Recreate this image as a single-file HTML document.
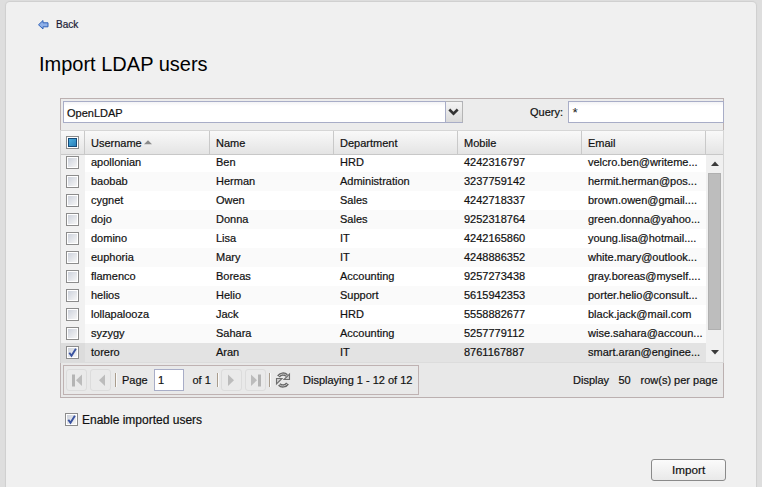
<!DOCTYPE html>
<html><head><meta charset="utf-8">
<style>
*{box-sizing:border-box;margin:0;padding:0}
html,body{width:762px;height:487px;overflow:hidden;background:#dedede;font-family:"Liberation Sans",sans-serif;font-size:11px;color:#111;-webkit-text-stroke:0.2px #111}
.abs{position:absolute;white-space:nowrap}
#panel{position:absolute;left:6px;top:2px;width:750px;height:500px;background:#f0f0f0;border-radius:4px;box-shadow:0 0 1px 1px #cfcfcf}
#back{left:56px;top:18.6px;color:#1f1f45;font-size:10px}
#backicon{left:38px;top:20px}
#title{left:39px;top:52.6px;font-size:20px;color:#000;-webkit-text-stroke:0}
#grid{left:60px;top:98px;width:664px;height:300px;border:1px solid #bbb0b0;background:#ececec}
.combo{left:63px;top:101px;width:400px;height:22px;border:1px solid #a8adc7;background:linear-gradient(#f3f3f5,#fff 4px)}
.combo span{position:absolute;left:3px;top:4.8px}
.trig{position:absolute;right:-1px;top:-1px;width:18px;height:22px;border:1px solid #b4b4b4;border-left-color:#a8adc7;border-bottom-color:#a8adc7;border-top-right-radius:2px;background:linear-gradient(#f4f4f4,#dadada)}
.trig svg{position:absolute;left:2px;top:6px}
#qlabel{left:530px;top:105.8px}
.qfield{left:568px;top:101px;width:156px;height:22px;border:1px solid #a8adc7;background:linear-gradient(#f3f3f5,#fff 4px)}
.qfield span{position:absolute;left:3.5px;top:2.5px;font-size:13.5px;-webkit-text-stroke:0;color:#222}
#hdr{position:absolute;z-index:2;left:61px;top:130px;width:662px;height:25px;background:linear-gradient(#f9f9f9,#e4e4e4);border-top:1px solid #d6d6d6;border-bottom:1px solid #c8c8c8}
.hc{position:absolute;top:0;height:23px;border-right:1px solid #c9c9c9}
.hc span{position:absolute;left:6px;top:5.8px}
.row{position:absolute;left:61px;width:645px;height:19px;background:#fff}
.row.alt{background:#fafafa}
.row.sel{background:#e3e3e3}
.row span{position:absolute;top:3.4px;white-space:nowrap}
.cbcol{position:absolute;left:0;top:0;width:24px;height:19px;background:#f1f1f1}
.row.sel .cbcol{background:#dcdcdc}
.cb{position:absolute;left:5px;top:3px;width:13px;height:13px;border:1px solid #8c8c8c;background:#fff;padding:1px}
.cb::before{content:"";display:block;width:9px;height:9px;background:linear-gradient(135deg,#cdd2dc,#f6f6f6)}
.cb.chk svg{position:absolute;left:0;top:0}
#hcb{z-index:3;left:66px;top:136px;width:13px;height:13px;border:1px solid #8c8c8c;background:#fff;padding:1px}
#hcb::before{content:"";display:block;width:9px;height:9px;box-sizing:border-box;border:1px solid #174a78;background:linear-gradient(135deg,#4ab0e0,#2a7fb8)}
#sb{left:706px;top:154px;width:17px;height:208px;background:#f0f0f0}
#thumb{left:708px;top:173px;width:13px;height:157px;background:#bdbdbd;border:1px solid #b0b0b0}
#pbar{left:61px;top:362px;width:662px;height:35px;background:#e8e8e8;border-top:1px solid #dcdcdc}
#pbox{left:63px;top:365px;width:356px;height:30px;border:1px solid #bfb2b2;background:#e9e9e9}
.pbtn{position:absolute;top:369px;width:21px;height:22px;border:1px solid #dcdcdc;border-radius:3px;background:#eaeaea}
.psep{position:absolute;top:373px;width:2px;height:14px;border-left:1px solid #a99c8c;border-right:1px solid #fafafa}
#pinput{left:154px;top:369px;width:30px;height:22px;border:1px solid #a8adc7;background:#fff}
#pinput span{position:absolute;left:3px;top:3.8px}
.ptxt{top:374px}
#enable{left:82px;top:412.8px;font-size:12px}
#ecb{left:65px;top:413px;width:13px;height:13px;border:1px solid #8c8c8c;background:#fff;padding:1px}
#ecb::before{content:"";display:block;width:9px;height:9px;background:linear-gradient(135deg,#cdd2dc,#f6f6f6)}
#ecb svg{position:absolute;left:0;top:0}
#import{left:651px;top:459px;width:75px;height:22px;border:1px solid #8a8a8a;border-radius:3px;background:linear-gradient(#fbfbfb,#e9e9e9)}
#import span{position:absolute;left:20px;top:3.2px;font-size:11.7px}
</style></head>
<body>
<div id="panel"></div>
<svg id="backicon" class="abs" width="11" height="10" viewBox="0 0 11 10"><path d="M0.5 4.8 L5 0.5 L5 2.8 L10 2.8 L10 6.8 L5 6.8 L5 9 Z" fill="#8fb0e8" stroke="#2f62b8" stroke-width="1" stroke-linejoin="round"/></svg>
<div id="back" class="abs">Back</div>
<div id="title" class="abs">Import LDAP users</div>
<div id="grid" class="abs"></div>
<div class="combo abs"><span>OpenLDAP</span><div class="trig"><svg width="11" height="8" viewBox="0 0 11 8"><path d="M1.3 1.5 L5.5 5.6 L9.7 1.5" fill="none" stroke="#333" stroke-width="2.6"/></svg></div></div>
<div id="qlabel" class="abs">Query:</div>
<div class="qfield abs"><span>*</span></div>
<div id="hdr">
 <div class="hc" style="left:0;width:24px"></div>
 <div class="hc" style="left:24px;width:125px"><span>Username</span><svg style="position:absolute;left:59px;top:9px" width="8" height="5" viewBox="0 0 8 5"><path d="M0 4.2 L4 0.2 L8 4.2 Z" fill="#8a8a8a"/></svg></div>
 <div class="hc" style="left:149px;width:124px"><span>Name</span></div>
 <div class="hc" style="left:273px;width:124px"><span>Department</span></div>
 <div class="hc" style="left:397px;width:124px"><span>Mobile</span></div>
 <div class="hc" style="left:521px;width:124px"><span>Email</span></div>
</div>
<div id="hcb" class="abs"></div>
<div class="row" style="top:153px"><div class="cbcol"><div class="cb"></div></div><span style="left:30px">apollonian</span><span style="left:155px">Ben</span><span style="left:279px">HRD</span><span style="left:403px">4242316797</span><span style="left:527px">velcro.ben@writeme...</span></div>
<div class="row alt" style="top:172px"><div class="cbcol"><div class="cb"></div></div><span style="left:30px">baobab</span><span style="left:155px">Herman</span><span style="left:279px">Administration</span><span style="left:403px">3237759142</span><span style="left:527px">hermit.herman@pos...</span></div>
<div class="row" style="top:191px"><div class="cbcol"><div class="cb"></div></div><span style="left:30px">cygnet</span><span style="left:155px">Owen</span><span style="left:279px">Sales</span><span style="left:403px">4242718337</span><span style="left:527px">brown.owen@gmail....</span></div>
<div class="row alt" style="top:210px"><div class="cbcol"><div class="cb"></div></div><span style="left:30px">dojo</span><span style="left:155px">Donna</span><span style="left:279px">Sales</span><span style="left:403px">9252318764</span><span style="left:527px">green.donna@yahoo...</span></div>
<div class="row" style="top:229px"><div class="cbcol"><div class="cb"></div></div><span style="left:30px">domino</span><span style="left:155px">Lisa</span><span style="left:279px">IT</span><span style="left:403px">4242165860</span><span style="left:527px">young.lisa@hotmail....</span></div>
<div class="row alt" style="top:248px"><div class="cbcol"><div class="cb"></div></div><span style="left:30px">euphoria</span><span style="left:155px">Mary</span><span style="left:279px">IT</span><span style="left:403px">4248886352</span><span style="left:527px">white.mary@outlook...</span></div>
<div class="row" style="top:267px"><div class="cbcol"><div class="cb"></div></div><span style="left:30px">flamenco</span><span style="left:155px">Boreas</span><span style="left:279px">Accounting</span><span style="left:403px">9257273438</span><span style="left:527px">gray.boreas@myself....</span></div>
<div class="row alt" style="top:286px"><div class="cbcol"><div class="cb"></div></div><span style="left:30px">helios</span><span style="left:155px">Helio</span><span style="left:279px">Support</span><span style="left:403px">5615942353</span><span style="left:527px">porter.helio@consult...</span></div>
<div class="row" style="top:305px"><div class="cbcol"><div class="cb"></div></div><span style="left:30px">lollapalooza</span><span style="left:155px">Jack</span><span style="left:279px">HRD</span><span style="left:403px">5558882677</span><span style="left:527px">black.jack@mail.com</span></div>
<div class="row alt" style="top:324px"><div class="cbcol"><div class="cb"></div></div><span style="left:30px">syzygy</span><span style="left:155px">Sahara</span><span style="left:279px">Accounting</span><span style="left:403px">5257779112</span><span style="left:527px">wise.sahara@accoun...</span></div>
<div class="row sel" style="top:343px"><div class="cbcol"><div class="cb chk"><svg width="11" height="11" viewBox="0 0 11 11"><path d="M2.3 5.7 L4.5 8.8 L8.9 1.7" fill="none" stroke="#3a53a0" stroke-width="1.9"/></svg></div></div><span style="left:30px">torero</span><span style="left:155px">Aran</span><span style="left:279px">IT</span><span style="left:403px">8761167887</span><span style="left:527px">smart.aran@enginee...</span></div>
<div id="sb" class="abs"></div>
<div class="abs" style="left:60px;top:130px;width:1px;height:233px;background:#d4d4d4;z-index:4"></div><div class="abs" style="left:723px;top:130px;width:1px;height:233px;background:#d4d4d4;z-index:4"></div>
<svg class="abs" style="left:711px;top:161px" width="8" height="5" viewBox="0 0 8 5"><path d="M0 5 L4 0.5 L8 5 Z" fill="#3a3a3a"/></svg>
<div id="thumb" class="abs"></div>
<svg class="abs" style="left:711px;top:350px" width="8" height="5" viewBox="0 0 8 5"><path d="M0 0 L4 4.5 L8 0 Z" fill="#3a3a3a"/></svg>
<div id="pbar" class="abs"></div>
<div id="pbox" class="abs"></div>
<div class="pbtn" style="left:66px"><svg style="position:absolute;left:4px;top:3.5px" width="12" height="13" viewBox="0 0 12 13"><rect x="1" y="0.5" width="3" height="12" fill="#b4b4b4"/><path d="M11 0.5 L5 6.2 L11 12 Z" fill="#bcbcbc"/></svg></div>
<div class="pbtn" style="left:90px"><svg style="position:absolute;left:4px;top:3.5px" width="12" height="13" viewBox="0 0 12 13"><path d="M10 0.5 L4 6.2 L10 12 Z" fill="#bcbcbc"/></svg></div>
<div class="psep" style="left:115px"></div>
<div class="abs ptxt" style="left:122px">Page</div>
<div id="pinput" class="abs"><span>1</span></div>
<div class="abs ptxt" style="left:192.5px">of 1</div>
<div class="psep" style="left:217px"></div>
<div class="pbtn" style="left:221px"><svg style="position:absolute;left:4px;top:3.5px" width="12" height="13" viewBox="0 0 12 13"><path d="M2 0.5 L8 6.2 L2 12 Z" fill="#bcbcbc"/></svg></div>
<div class="pbtn" style="left:245px"><svg style="position:absolute;left:4px;top:3.5px" width="12" height="13" viewBox="0 0 12 13"><path d="M1 0.5 L7 6.2 L1 12 Z" fill="#bcbcbc"/><rect x="8" y="0.5" width="3" height="12" fill="#b4b4b4"/></svg></div>
<div class="psep" style="left:269px"></div>
<svg class="abs" style="left:272px;top:368px" width="24" height="24" viewBox="0 0 24 24"><g stroke-linecap="butt"><path d="M6.5 8.5 A5.5 5.5 0 0 1 14.8 7.5" fill="none" stroke="#666" stroke-width="3.4"/><path d="M6.5 8.5 A5.5 5.5 0 0 1 14.8 7.5" fill="none" stroke="#c4c4c4" stroke-width="1"/><path d="M15.5 15.5 A5.5 5.5 0 0 1 7.2 16.5" fill="none" stroke="#666" stroke-width="3.4"/><path d="M15.5 15.5 A5.5 5.5 0 0 1 7.2 16.5" fill="none" stroke="#c4c4c4" stroke-width="1"/></g><path d="M17.5 6 L17.5 11.5 L12 11.5 Z" fill="#d0d0d0" stroke="#6e6e6e" stroke-width="1.1" stroke-linejoin="miter"/><path d="M4.5 10.5 L4.5 16 L10 10.5 Z" fill="#d0d0d0" stroke="#6e6e6e" stroke-width="1.1"/></svg>
<div class="abs ptxt" style="left:303px">Displaying 1 - 12 of 12</div>
<div class="abs ptxt" style="left:573px">Display</div>
<div class="abs ptxt" style="left:618.5px">50</div>
<div class="abs ptxt" style="left:640.5px">row(s) per page</div>
<div id="ecb" class="abs"><svg width="11" height="11" viewBox="0 0 11 11"><path d="M2.3 5.7 L4.5 8.8 L8.9 1.7" fill="none" stroke="#3a53a0" stroke-width="1.9"/></svg></div>
<div id="enable" class="abs">Enable imported users</div>
<div id="import" class="abs"><span>Import</span></div>
</body></html>
